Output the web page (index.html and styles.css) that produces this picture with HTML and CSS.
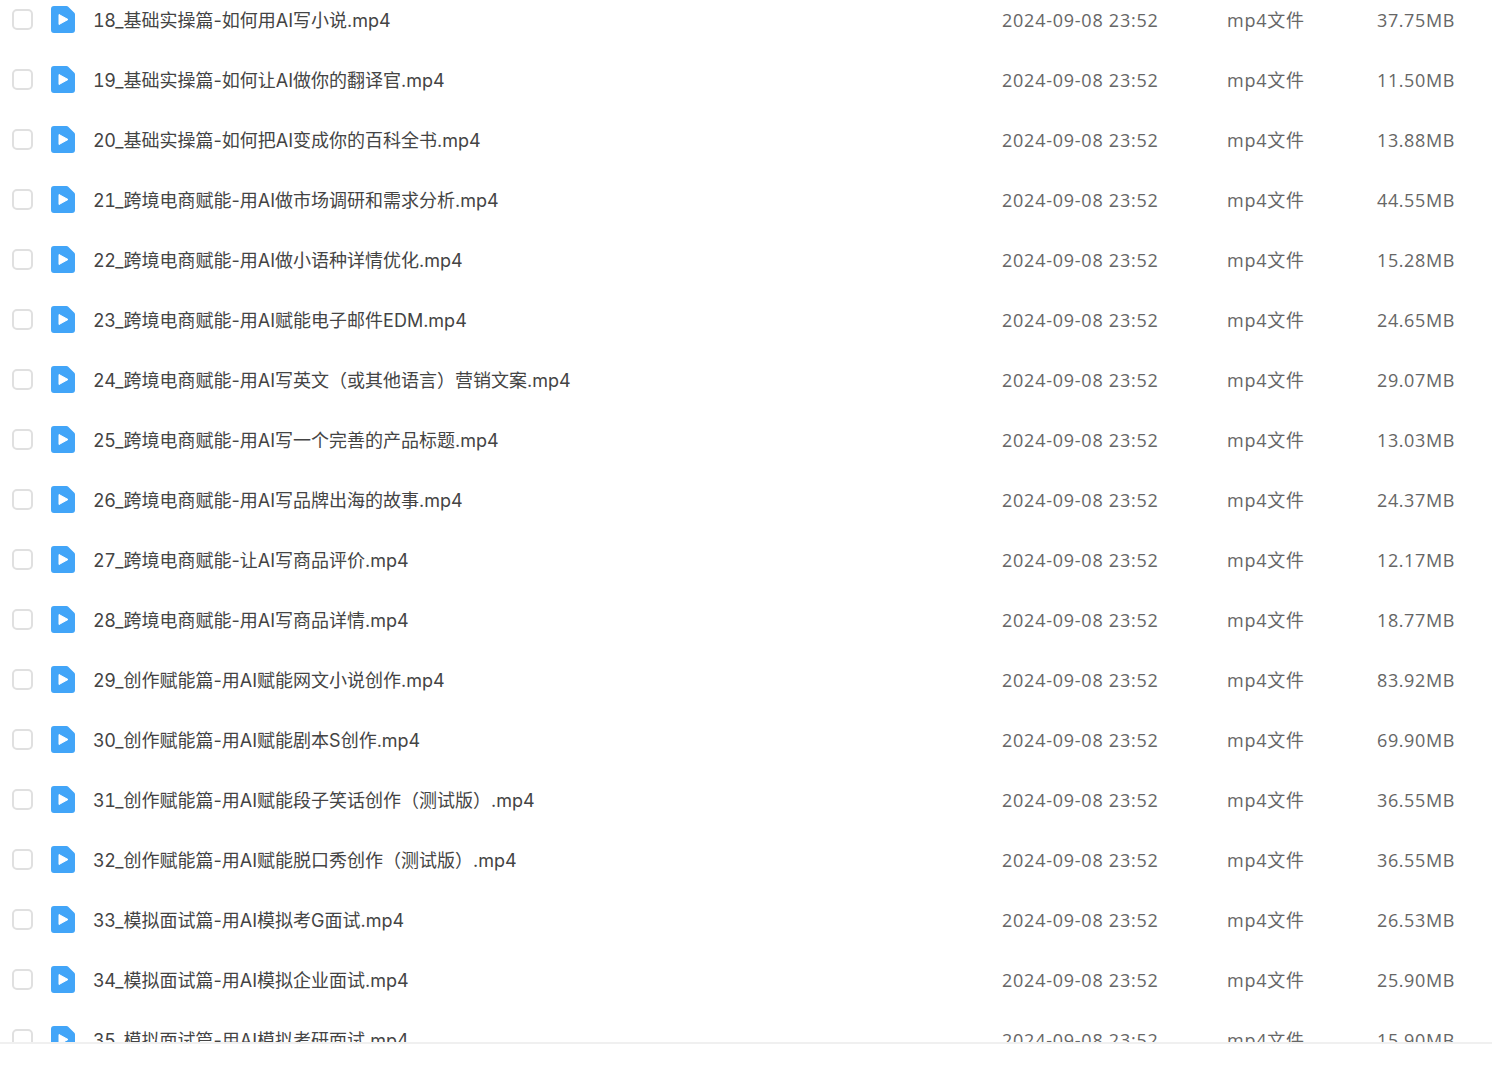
FILE: index.html
```html
<!DOCTYPE html>
<html lang="zh-CN">
<head>
<meta charset="utf-8">
<title>文件列表</title>
<link rel="stylesheet" href="styles.css">
</head>
<body>
<svg class="defs" width="0" height="0">
	<symbol id="video" viewBox="0 0 24 27">
		<path d="M3 0H15.5Q16.5 0 17.2 .7L23.3 6.8Q24 7.5 24 8.5V24a3 3 0 0 1-3 3H3a3 3 0 0 1-3-3V3a3 3 0 0 1 3-3z" fill="#42a5f8"/>
		<path d="M8 8.5 17 13.5 8 18.5z" fill="#fff" stroke="#fff" stroke-width="1" stroke-linejoin="round"/>
	</symbol>
</svg>
<div class="list">
	<ul>
		<li class="row"><span class="check"></span><svg class="icon"><use href="#video"/></svg><a class="name"><span class="num">18</span>_基础实操篇-如何用AI写小说.mp4</a><span class="date">2024-09-08 23:52</span><span class="type">mp4文件</span><span class="size">37.75MB</span></li>
		<li class="row"><span class="check"></span><svg class="icon"><use href="#video"/></svg><a class="name"><span class="num">19</span>_基础实操篇-如何让AI做你的翻译官.mp4</a><span class="date">2024-09-08 23:52</span><span class="type">mp4文件</span><span class="size">11.50MB</span></li>
		<li class="row"><span class="check"></span><svg class="icon"><use href="#video"/></svg><a class="name"><span class="num">20</span>_基础实操篇-如何把AI变成你的百科全书.mp4</a><span class="date">2024-09-08 23:52</span><span class="type">mp4文件</span><span class="size">13.88MB</span></li>
		<li class="row"><span class="check"></span><svg class="icon"><use href="#video"/></svg><a class="name"><span class="num">21</span>_跨境电商赋能-用AI做市场调研和需求分析.mp4</a><span class="date">2024-09-08 23:52</span><span class="type">mp4文件</span><span class="size">44.55MB</span></li>
		<li class="row"><span class="check"></span><svg class="icon"><use href="#video"/></svg><a class="name"><span class="num">22</span>_跨境电商赋能-用AI做小语种详情优化.mp4</a><span class="date">2024-09-08 23:52</span><span class="type">mp4文件</span><span class="size">15.28MB</span></li>
		<li class="row"><span class="check"></span><svg class="icon"><use href="#video"/></svg><a class="name"><span class="num">23</span>_跨境电商赋能-用AI赋能电子邮件EDM.mp4</a><span class="date">2024-09-08 23:52</span><span class="type">mp4文件</span><span class="size">24.65MB</span></li>
		<li class="row"><span class="check"></span><svg class="icon"><use href="#video"/></svg><a class="name"><span class="num">24</span>_跨境电商赋能-用AI写英文（或其他语言）营销文案.mp4</a><span class="date">2024-09-08 23:52</span><span class="type">mp4文件</span><span class="size">29.07MB</span></li>
		<li class="row"><span class="check"></span><svg class="icon"><use href="#video"/></svg><a class="name"><span class="num">25</span>_跨境电商赋能-用AI写一个完善的产品标题.mp4</a><span class="date">2024-09-08 23:52</span><span class="type">mp4文件</span><span class="size">13.03MB</span></li>
		<li class="row"><span class="check"></span><svg class="icon"><use href="#video"/></svg><a class="name"><span class="num">26</span>_跨境电商赋能-用AI写品牌出海的故事.mp4</a><span class="date">2024-09-08 23:52</span><span class="type">mp4文件</span><span class="size">24.37MB</span></li>
		<li class="row"><span class="check"></span><svg class="icon"><use href="#video"/></svg><a class="name"><span class="num">27</span>_跨境电商赋能-让AI写商品评价.mp4</a><span class="date">2024-09-08 23:52</span><span class="type">mp4文件</span><span class="size">12.17MB</span></li>
		<li class="row"><span class="check"></span><svg class="icon"><use href="#video"/></svg><a class="name"><span class="num">28</span>_跨境电商赋能-用AI写商品详情.mp4</a><span class="date">2024-09-08 23:52</span><span class="type">mp4文件</span><span class="size">18.77MB</span></li>
		<li class="row"><span class="check"></span><svg class="icon"><use href="#video"/></svg><a class="name"><span class="num">29</span>_创作赋能篇-用AI赋能网文小说创作.mp4</a><span class="date">2024-09-08 23:52</span><span class="type">mp4文件</span><span class="size">83.92MB</span></li>
		<li class="row"><span class="check"></span><svg class="icon"><use href="#video"/></svg><a class="name"><span class="num">30</span>_创作赋能篇-用AI赋能剧本S创作.mp4</a><span class="date">2024-09-08 23:52</span><span class="type">mp4文件</span><span class="size">69.90MB</span></li>
		<li class="row"><span class="check"></span><svg class="icon"><use href="#video"/></svg><a class="name"><span class="num">31</span>_创作赋能篇-用AI赋能段子笑话创作（测试版）.mp4</a><span class="date">2024-09-08 23:52</span><span class="type">mp4文件</span><span class="size">36.55MB</span></li>
		<li class="row"><span class="check"></span><svg class="icon"><use href="#video"/></svg><a class="name"><span class="num">32</span>_创作赋能篇-用AI赋能脱口秀创作（测试版）.mp4</a><span class="date">2024-09-08 23:52</span><span class="type">mp4文件</span><span class="size">36.55MB</span></li>
		<li class="row"><span class="check"></span><svg class="icon"><use href="#video"/></svg><a class="name"><span class="num">33</span>_模拟面试篇-用AI模拟考G面试.mp4</a><span class="date">2024-09-08 23:52</span><span class="type">mp4文件</span><span class="size">26.53MB</span></li>
		<li class="row"><span class="check"></span><svg class="icon"><use href="#video"/></svg><a class="name"><span class="num">34</span>_模拟面试篇-用AI模拟企业面试.mp4</a><span class="date">2024-09-08 23:52</span><span class="type">mp4文件</span><span class="size">25.90MB</span></li>
		<li class="row"><span class="check"></span><svg class="icon"><use href="#video"/></svg><a class="name"><span class="num">35</span>_模拟面试篇-用AI模拟考研面试.mp4</a><span class="date">2024-09-08 23:52</span><span class="type">mp4文件</span><span class="size">15.90MB</span></li>
	</ul>
</div>
</body>
</html>
```

FILE: styles.css
```css
* {margin:0; padding:0; box-sizing:border-box}
html, body {height:100%; overflow:hidden}
body {background-color:#fff; font-family:"Open Sans", "Noto Sans CJK SC", sans-serif; font-size:18px; color:#666}
li {list-style:none}
.defs {position:absolute}

/* list is scrolled, first row is cut at the top */
.list {height:1044px; overflow:hidden; border-bottom:2px solid #f0f0f0}
.list > ul {margin-top:-10px}

.row {display:grid; grid-template-columns:39px 42px 909px 225px 150px 1fr; align-items:center; height:60px; padding-left:12px}
.check {width:21px; height:21px; margin-bottom:1px; border:2px solid #e0e0e0; border-radius:5px; background-color:#fff}
.icon {width:24px; height:27px; margin-bottom:1px}
.name {font-family:Inter, "Noto Sans CJK SC", sans-serif; color:#444; white-space:nowrap; padding-bottom:2px}
.num {font-variant-numeric:tabular-nums; letter-spacing:-.5px}
.date, .type, .size {letter-spacing:.75px; white-space:nowrap}
.type {padding-bottom:2px}
.size {letter-spacing:.6px}
```
